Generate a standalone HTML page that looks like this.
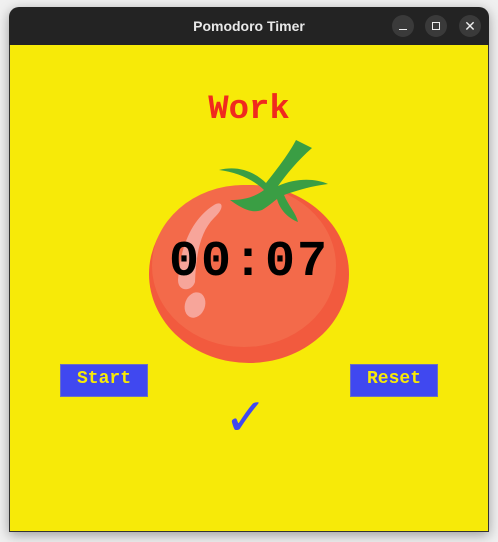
<!DOCTYPE html>
<html><head><style>
html,body{margin:0;padding:0;width:498px;height:542px;background:#f0f0f0;overflow:hidden;font-family:"Liberation Sans",sans-serif}
.win{position:absolute;left:9px;top:7px;width:480px;height:525px;border-radius:10px 10px 0 0;box-shadow:0 3px 12px rgba(0,0,0,.35);background:#232323}
.tb{position:absolute;left:0;top:0;width:480px;height:38px;color:#e8e8e8;font-weight:bold;font-size:14px;text-align:center;line-height:38px}
.cb{position:absolute;top:8px;width:22px;height:22px;border-radius:50%;background:#3a3a3a}
.content{position:absolute;left:9px;top:45px;width:478px;height:486px;background:#f7ea08;border:1px solid #333;border-top:none}
.mono{font-family:"Liberation Mono",monospace;font-weight:bold}
.btn{position:absolute;top:364px;width:86px;height:31px;background:#4048f0;border:1px solid #6a70c0;color:#f7ea08;font-size:18px;line-height:28px;text-align:center}
</style></head><body>
<div class="win">
<div class="tb">Pomodoro Timer</div>
<div class="cb" style="left:383px"><div style="position:absolute;left:7px;top:14px;width:8px;height:1px;background:#eee"></div></div>
<div class="cb" style="left:416px"><div style="position:absolute;left:7px;top:7px;width:6px;height:6px;border:1px solid #eee"></div></div>
<div class="cb" style="left:450px;color:#eee;font-size:14px;line-height:22px;text-align:center">✕</div>
</div>
<div class="content"></div>
<div class="mono" style="position:absolute;left:0;width:498px;top:90px;text-align:center;color:#f02a1e;font-size:34px;line-height:40px">Work</div>
<svg style="position:absolute;left:0;top:0" width="498" height="542">
<ellipse cx="249" cy="274" rx="100" ry="89" fill="#f25a3e"/>
<ellipse cx="244" cy="266" rx="92" ry="81" fill="#f36a4a"/>
<path d="M214 205 C190 220 180 250 178 280 C178 292 192 292 195 282 C196 255 200 232 214 218 C226 207 222 200 214 205Z" fill="#f7a59a"/>
<ellipse cx="195" cy="305" rx="10" ry="13" transform="rotate(20 195 305)" fill="#f7a59a"/>
<path d="M219 170 C238 165 255 172 266 183 C278 168 290 152 296 140 L312 148 C298 160 286 175 278 186 C295 178 315 178 328 184 C312 186 298 190 284 195 C288 205 296 213 298 222 C288 218 280 210 277 199 C273 202 270 205 262 210 C254 213 245 211 230 200 C246 200 256 196 264 190 C254 180 237 172 219 170Z" fill="#3a9e44"/>
</svg>
<div class="mono" style="position:absolute;left:0;width:498px;top:236px;text-align:center;color:#000;font-size:50px;line-height:54px;letter-spacing:2px">00:07</div>
<div class="btn mono" style="left:60px">Start</div>
<div class="btn mono" style="left:350px">Reset</div>
<div style="position:absolute;left:224px;top:390px;color:#4048f0;font-size:52px;line-height:56px;font-family:'DejaVu Sans',sans-serif;font-weight:bold">✓</div>
</body></html>
